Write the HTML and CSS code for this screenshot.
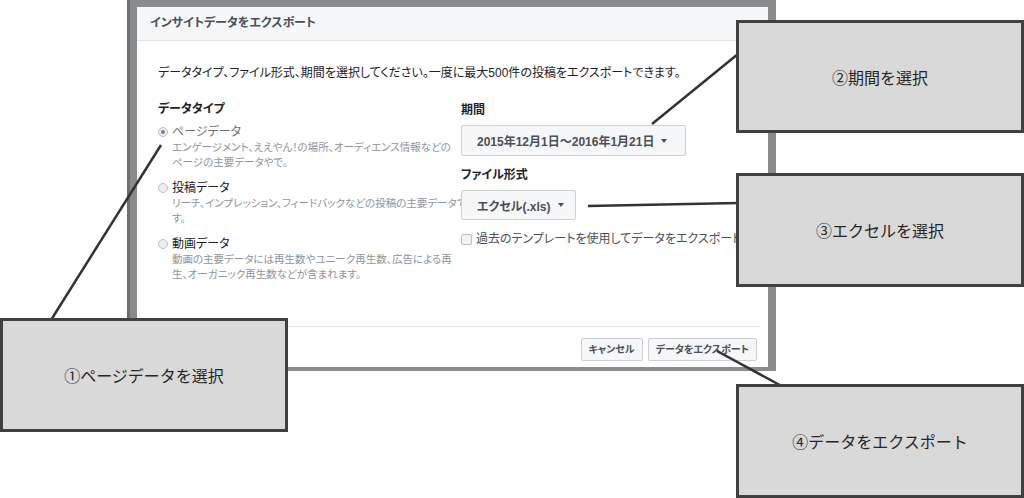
FILE: index.html
```html
<!DOCTYPE html>
<html lang="ja">
<head>
<meta charset="utf-8">
<title>インサイトデータをエクスポート</title>
<link rel="stylesheet" href="styles.css">
</head>
<body>
<div class="page">
  <div class="backdrop">
    <div class="dialog">
      <div class="dlg-head">インサイトデータをエクスポート</div>
      <div class="dlg-body">
        <p class="intro">データタイプ、ファイル形式、期間を選択してください。一度に最大500件の投稿をエクスポートできます。</p>
        <div class="cols">
          <div class="col-left">
            <div class="label">データタイプ</div>
            <div class="opt">
              <span class="radio checked"></span>
              <div class="opt-text">
                <div class="opt-title muted">ページデータ</div>
                <div class="opt-desc">エンゲージメント、ええやん！の場所、オーディエンス情報などの<br>ページの主要データやで。</div>
              </div>
            </div>
            <div class="opt">
              <span class="radio"></span>
              <div class="opt-text">
                <div class="opt-title">投稿データ</div>
                <div class="opt-desc">リーチ、インプレッション、フィードバックなどの投稿の主要データで<br>す。</div>
              </div>
            </div>
            <div class="opt">
              <span class="radio"></span>
              <div class="opt-text">
                <div class="opt-title">動画データ</div>
                <div class="opt-desc">動画の主要データには再生数やユニーク再生数、広告による再<br>生、オーガニック再生数などが含まれます。</div>
              </div>
            </div>
          </div>
          <div class="col-right">
            <div class="label label-top">期間</div>
            <div class="select select-date">2015年12月1日～2016年1月21日<span class="caret"></span></div>
            <div class="label label-gap">ファイル形式</div>
            <div class="select select-file">エクセル(.xls)<span class="caret"></span></div>
            <div class="check"><span class="box"></span>過去のテンプレートを使用してデータをエクスポート</div>
          </div>
        </div>
      </div>
      <div class="dlg-foot">
        <span class="btn">キャンセル</span>
        <span class="btn">データをエクスポート</span>
      </div>
    </div>
  </div>

  <svg class="leaders" width="1024" height="498" viewBox="0 0 1024 498">
    <line x1="161" y1="145" x2="51" y2="320"/>
    <line x1="652" y1="124" x2="738" y2="54"/>
    <line x1="588" y1="206" x2="738" y2="203"/>
    <line x1="717" y1="351" x2="787" y2="389"/>
  </svg>

  <div class="callout c1">①ページデータを選択</div>
  <div class="callout c2">②期間を選択</div>
  <div class="callout c3">③エクセルを選択</div>
  <div class="callout c4">④データをエクスポート</div>
</div>
</body>
</html>
```

FILE: styles.css
```css
html, body {
  margin: 0;
  padding: 0;
  background: #ffffff;
}

.page {
  position: relative;
  width: 1024px;
  height: 498px;
  overflow: hidden;
  font-family: "Liberation Sans", "Noto Sans CJK JP", sans-serif;
  font-feature-settings: "palt";
  color: #1d2129;
}

.backdrop {
  margin-left: 127px;
  width: 631px;
  height: 364px;
  padding: 7px 8px 0 7px;
  background: #8a8b8d;
  border-left: 3px solid #6f7071;
}

.dialog {
  width: 631px;
  height: 360px;
  background: #ffffff;
  display: flex;
  flex-direction: column;
}

.dlg-head {
  height: 33px;
  line-height: 33px;
  padding-left: 13px;
  background: #f6f7f9;
  border-bottom: 1px solid #e5e5e5;
  font-size: 12px;
  font-weight: 700;
  color: #4b4f56;
}

.dlg-body {
  height: 261px;
  padding: 24px 0 0 21px;
}

.intro {
  margin: 0;
  font-size: 12px;
  line-height: 16px;
  color: #1d2129;
}

.cols {
  display: flex;
  margin-top: 20px;
}

.col-left {
  width: 303px;
  flex: none;
}

.label {
  font-size: 12px;
  font-weight: 700;
  line-height: 16px;
  color: #1d2129;
}

.label-top {
  margin-top: 1px;
}

.opt {
  display: flex;
  align-items: flex-start;
  margin-top: 10px;
}

.label + .opt {
  margin-top: 7px;
}

.radio {
  flex: none;
  width: 10px;
  height: 10px;
  margin: 3px 4px 0 0;
  border-radius: 50%;
  border: 1px solid #bec2c9;
  background: #eceef1;
  box-sizing: border-box;
  position: relative;
}

.radio.checked::after {
  content: "";
  position: absolute;
  left: 2px;
  top: 2px;
  width: 4px;
  height: 4px;
  border-radius: 50%;
  background: #7f8388;
}

.opt-title {
  font-size: 12px;
  line-height: 16px;
  color: #1d2129;
}

.opt-title.muted {
  color: #6b6f76;
}

.opt-desc {
  font-size: 10.5px;
  line-height: 15px;
  color: #90949c;
  white-space: nowrap;
}

.col-right {
  flex: 1;
}

.select {
  display: inline-flex;
  align-items: center;
  box-sizing: border-box;
  margin-top: 7px;
  height: 31px;
  padding: 0 12px 0 15px;
  background: #f6f7f9;
  border: 1px solid #ced0d4;
  border-radius: 2px;
  font-size: 12px;
  font-weight: 700;
  color: #4b4f56;
  white-space: nowrap;
}

.select-date {
  width: 225px;
}

.select-file {
  width: 115px;
  height: 30px;
  margin-top: 7px;
}

.caret {
  margin-left: 7px;
  width: 0;
  height: 0;
  border-left: 3.5px solid transparent;
  border-right: 3.5px solid transparent;
  border-top: 4px solid #4b4f56;
}

.label-gap {
  margin-top: 11px;
}

.check {
  display: flex;
  align-items: center;
  margin-top: 11px;
  font-size: 12px;
  line-height: 16px;
  color: #4b4f56;
  white-space: nowrap;
}

.box {
  flex: none;
  width: 11px;
  height: 11px;
  margin-right: 4px;
  box-sizing: border-box;
  border: 1px solid #bec2c9;
  border-radius: 2px;
  background: #f1f2f4;
}

.dlg-foot {
  margin: 0 8px 0 12px;
  border-top: 1px solid #e5e5e5;
  padding: 11px 3px 0 0;
  display: flex;
  justify-content: flex-end;
  gap: 5px;
}

.btn {
  height: 23px;
  line-height: 21px;
  box-sizing: border-box;
  padding: 0 7px;
  background: #f6f7f9;
  border: 1px solid #ced0d4;
  border-radius: 2px;
  font-size: 10px;
  font-weight: 700;
  color: #4b4f56;
  white-space: nowrap;
}

.leaders {
  position: absolute;
  left: 0;
  top: 0;
}

.leaders line {
  stroke: #333333;
  stroke-width: 2.5;
}

.callout {
  position: absolute;
  width: 288px;
  height: 114px;
  box-sizing: border-box;
  border: 3px solid #404040;
  background: #d9d9d9;
  display: flex;
  align-items: center;
  justify-content: center;
  font-family: "Noto Sans CJK JP", sans-serif;
  font-feature-settings: normal;
  font-size: 16px;
  color: #262626;
}

.c1 { left: 0; top: 318px; }
.c2 { left: 736px; top: 20px; height: 113px; }
.c3 { left: 736px; top: 173px; }
.c4 { left: 736px; top: 384px; }
```
